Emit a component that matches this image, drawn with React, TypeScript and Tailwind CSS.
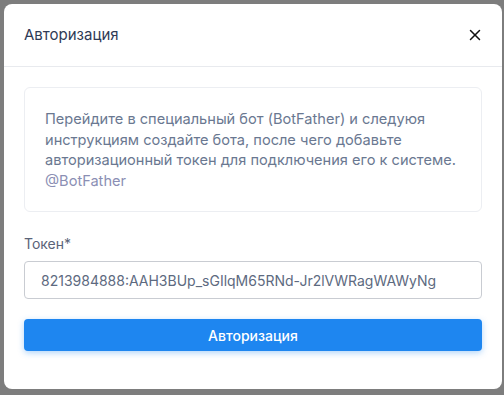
import { X } from "lucide-react";

function App() {
  return (
    <div className="min-h-[395px] w-[504px] bg-[#7d7d7d] p-1 font-['Inter',sans-serif]">
      <div className="w-[498px] rounded-lg bg-white">
        <div className="flex h-[63px] items-center justify-between border-b border-[#e8eaee] pl-5 pr-[18px]">
          <span className="text-[15px] text-[#2f3a55]">Авторизация</span>
          <X className="h-[18px] w-[18px] text-[#111]" strokeWidth={2} />
        </div>

        <div className="px-5 pb-[38px] pt-5">
          <div className="rounded-md border border-[#eceef2] px-5 pb-5 pt-[21px] text-[14.6px] leading-[20.5px] text-[#6a7891]">
            <p>
              Перейдите в специальный бот (BotFather) и следуюя инструкциям
              создайте бота, после чего добавьте авторизационный токен для
              подключения его к системе.
            </p>
            <p className="text-[#8b8fb4]">@BotFather</p>
          </div>

          <div className="mt-[22px] text-[14px] leading-5 text-[#5a6378]">Токен*</div>

          <div className="mt-[7px] flex h-[38px] items-center rounded border border-[#c9ccd2] px-4 text-[14px] text-[#5d6a80]">
            8213984888:AAH3BUp_sGIlqM65RNd-Jr2lVWRagWAWyNg
          </div>

          <button className="mt-5 flex h-8 w-full items-center justify-center rounded bg-[#1e86f0] text-[14px] font-medium text-white shadow-[0_2px_6px_rgba(30,134,240,0.35)]">
            Авторизация
          </button>
        </div>
      </div>
    </div>
  );
}

export default App;
